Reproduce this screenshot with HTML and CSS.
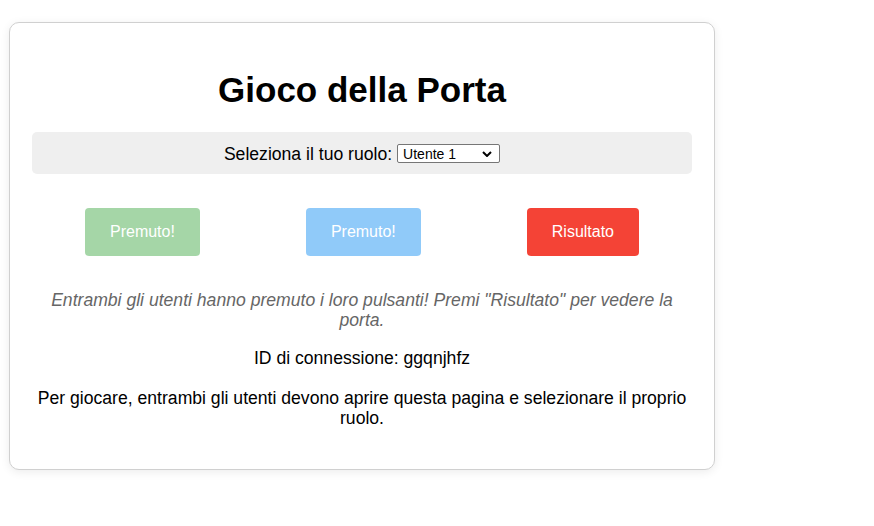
FILE: index.html
```html
<!DOCTYPE html>
<html lang="it">
<head>
<meta charset="utf-8">
<title>Gioco della Porta</title>
<link rel="stylesheet" href="styles.css">
</head>
<body>
<div class="card">
  <h1 class="title">Gioco della Porta</h1>
  <div class="role-bar">
    <label class="role-label" for="ruolo">Seleziona il tuo ruolo:</label>
    <select id="ruolo" class="role-select">
      <option>Utente 1</option>
      <option>Utente 2</option>
    </select>
  </div>
  <div class="buttons">
    <button class="btn btn-green">Premuto!</button>
    <button class="btn btn-blue">Premuto!</button>
    <button class="btn btn-red">Risultato</button>
  </div>
  <p class="status">Entrambi gli utenti hanno premuto i loro pulsanti! Premi "Risultato" per vedere la porta.</p>
  <p class="conn">ID di connessione: ggqnjhfz</p>
  <p class="info">Per giocare, entrambi gli utenti devono aprire questa pagina e selezionare il proprio ruolo.</p>
</div>
</body>
</html>
```
FILE: styles.css
```css
html, body {
  margin: 0;
  background: #ffffff;
}
body {
  padding: 22px 9px;
  font-family: "Liberation Sans", Arial, sans-serif;
  font-size: 17.6px;
  color: #000;
}
.card {
  box-sizing: border-box;
  width: 706px;
  border: 1px solid #d0d0d0;
  border-radius: 10px;
  padding: 22px;
  background: #fff;
  box-shadow: 0 2px 10px rgba(0, 0, 0, 0.08);
  text-align: center;
}
.title {
  margin: 26px 0 0;
  font-size: 35px;
  font-weight: bold;
  line-height: 37px;
}
.role-bar {
  margin-top: 24px;
  height: 42px;
  box-sizing: border-box;
  padding-top: 2px;
  background: #efefef;
  border-radius: 5px;
  display: flex;
  justify-content: center;
  align-items: center;
  gap: 5px;
}
.role-label {
  font-size: 17.6px;
}
.role-select {
  appearance: none;
  -webkit-appearance: none;
  box-sizing: border-box;
  width: 103px;
  height: 19px;
  margin-top: -1px;
  padding: 0 0 0 5px;
  border: 1px solid #767676;
  border-radius: 2px;
  background: #fff url("data:image/svg+xml;utf8,<svg xmlns='http://www.w3.org/2000/svg' width='10' height='6' viewBox='0 0 10 6'><path d='M1 1 L5 5 L9 1' fill='none' stroke='black' stroke-width='2'/></svg>") no-repeat right 7px center;
  font-family: "Liberation Sans", Arial, sans-serif;
  font-size: 14px;
  color: #000;
}
.buttons {
  margin-top: 34px;
  display: flex;
  justify-content: space-around;
}
.btn {
  border: none;
  border-radius: 4px;
  padding: 15px 25px;
  font-family: "Liberation Sans", Arial, sans-serif;
  font-size: 16px;
  line-height: 18px;
  color: #fff;
}
.btn-green { background: #a5d6a7; }
.btn-blue { background: #90caf9; }
.btn-red { background: #f44336; }
.status {
  margin: 35px 0 0;
  font-style: italic;
  color: #666;
  line-height: 19.5px;
}
.conn {
  margin: 19px 0 0;
  line-height: 19.5px;
}
.info {
  margin: 19.5px 0 19px;
  line-height: 20px;
}
```
